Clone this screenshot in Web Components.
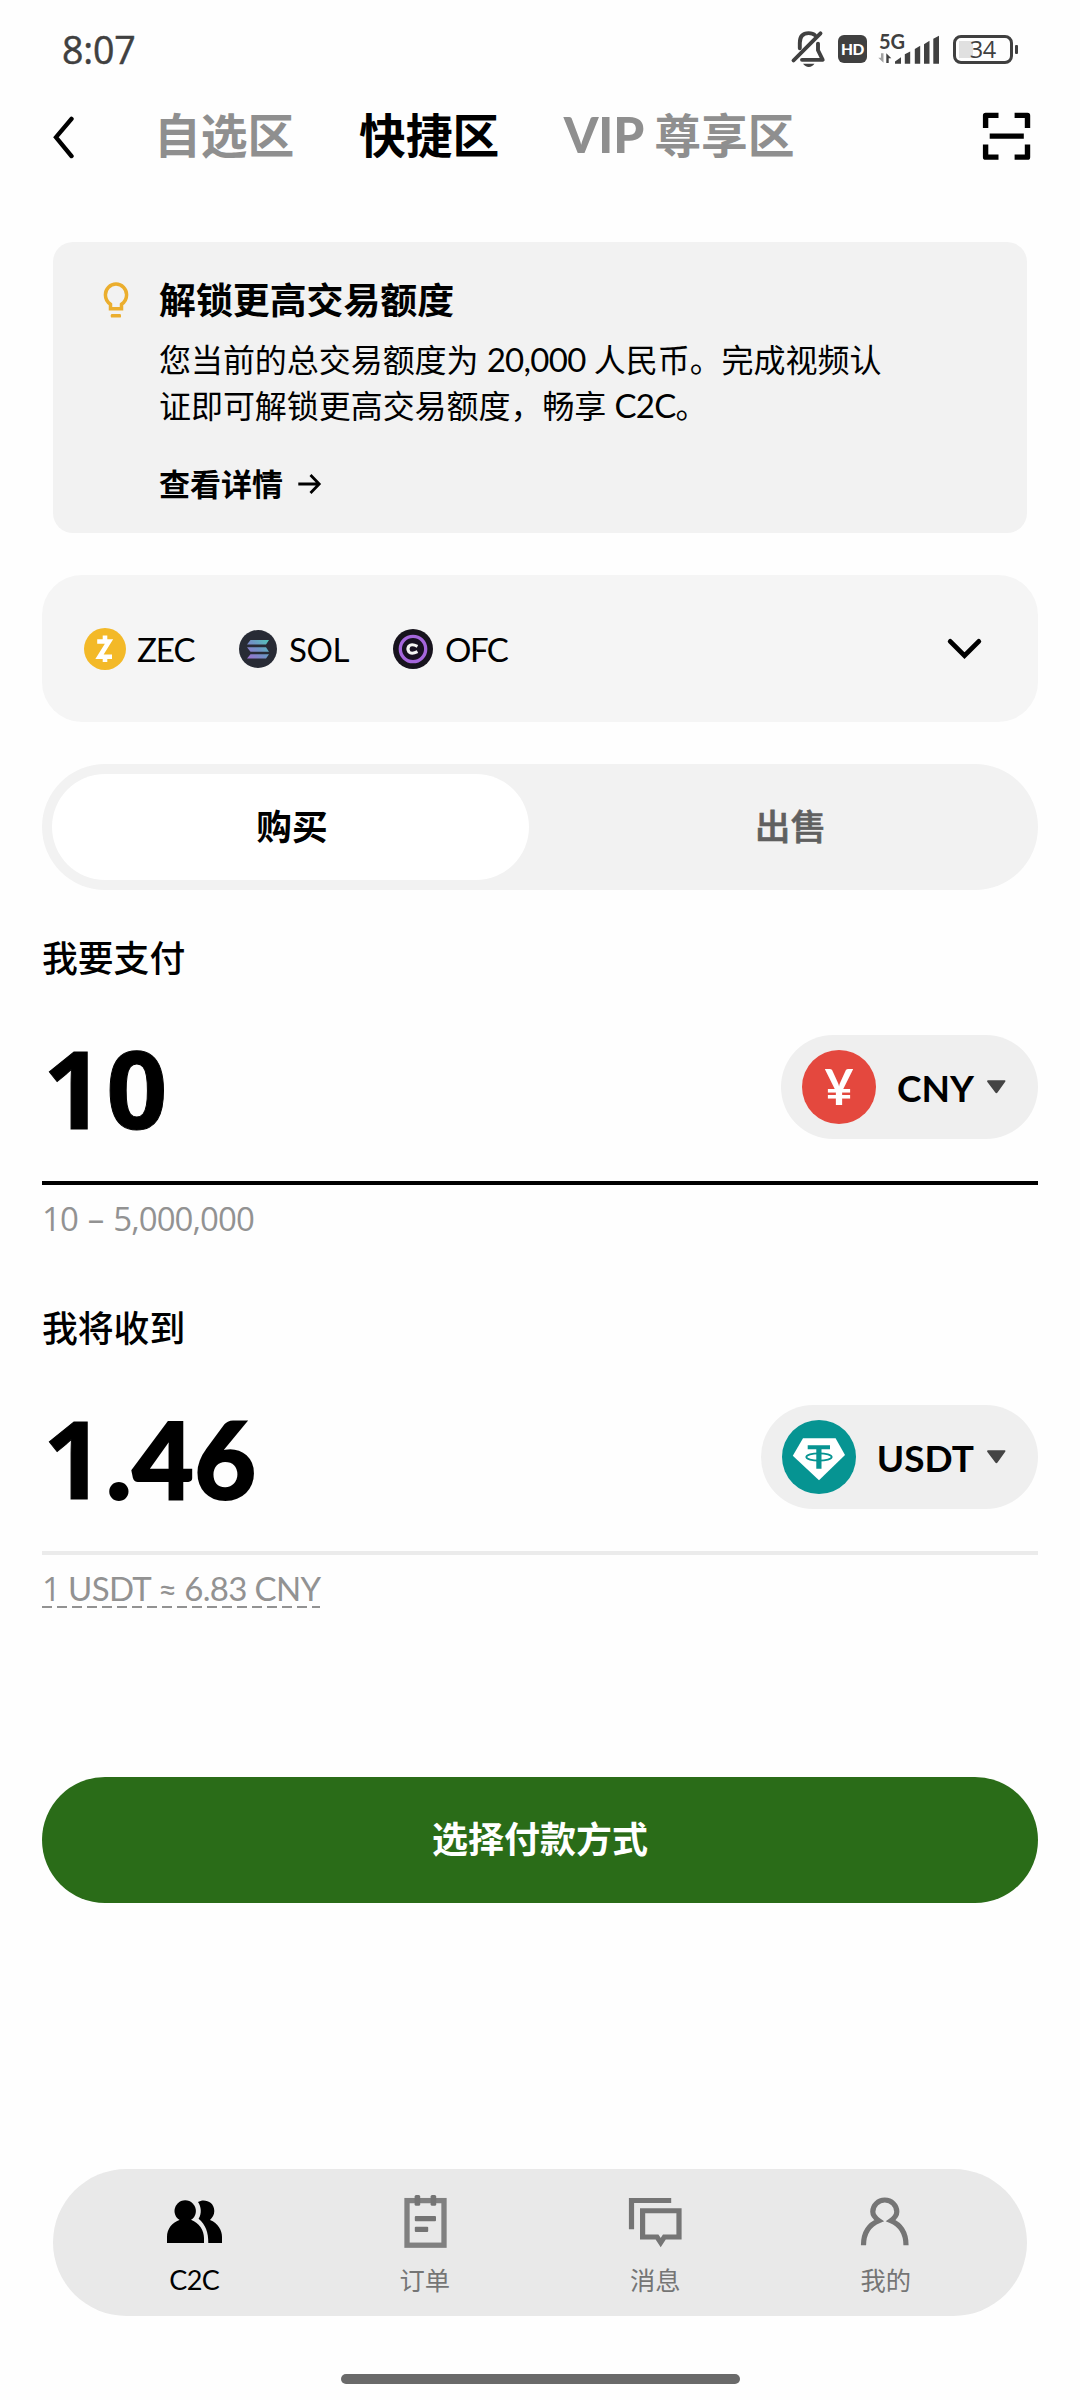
<!DOCTYPE html>
<html lang="zh-CN">
<head>
<meta charset="utf-8">
<title>C2C 快捷区</title>
<style>
  html, body { margin: 0; background: #fefefe; }
  body { font-family: Lato, "Noto Sans CJK SC", sans-serif; color: #000; -webkit-font-smoothing: antialiased; }
</style>
</head>
<body>
<c2c-screen></c2c-screen>

<script>
const define = (name, html, setup) => {
  const tpl = document.createElement('template');
  tpl.innerHTML = html;
  customElements.define(name, class extends HTMLElement {
    constructor() {
      super();
      this.attachShadow({ mode: 'open' }).append(tpl.content.cloneNode(true));
    }
    connectedCallback() { if (setup) setup(this, this.shadowRoot); }
  });
};

/* name: [x, y, width, height, markup, drawn height if it differs] */
const ICONS = {
  mute: [790, 31, 37, 41, `<g fill="none" stroke="#404040" stroke-width="3.9" stroke-linecap="round" stroke-linejoin="round"><path d="M799.800 51V45.500Q799.800 35.300 808.600 35.300Q813 35.300 815 37.500M818 46V53L822.700 62.800H802"/><path d="M793.500 63.500L820.500 35.500"/></g><path d="M803 67h11.500q-2 3.200-5.700 3.200t-5.800-3.200z" fill="#404040"/>`, 39.7],
  signal: [878, 35, 62, 32, `<g fill="#404040"><path d="M895 65.800V63.500l6-4.500v6.800zM904.800 65.800V56l5.400-3v12.800zM914.800 65.800V50.500l5.400-3.500v18.800zM924 65.800V45.500l5.500-3.500v23.800zM933.300 65.800V40l5.700-3.200v29z"/><path d="M886.300 65V54.800l5 5.200h-2.600v5z"/></g><path d="M883.500 54.800V64.800l-5.200-5.200h2.700v-4.800z" fill="#a2a2a2"/>`, 31],
  back: [50, 116, 27, 48, `<path d="M71.500 122L56 141L71.500 160.500" fill="none" stroke="#000" stroke-width="4.400" stroke-linecap="round" stroke-linejoin="miter"/>`, 46.5],
  scan: [982, 116, 50, 50, `<g fill="none" stroke="#000" stroke-width="5.400"><path d="M985.600 132.500V119.500H998.500M1014.600 119.500H1027.500V132.500M1027.500 149.500V162.700H1014.600M998.500 162.700H985.600V149.500" stroke-linejoin="round"/><path d="M989.700 141H1023.800"/></g>`, 48.4],
  bulb: [100, 280, 32, 40, `<path d="M110.500 308.700V304.300C107.200 302 105.400 299 105.400 294.700A10.600 10.600 0 0 1 126.600 294.700C126.600 299 124.800 302 121.500 304.300V308.700Z" fill="none" stroke="#ebae2e" stroke-width="3.500"/><rect x="110.800" y="314" width="10.200" height="3.600" rx="1.200" fill="#ebae2e"/>`],
  arrow: [298, 473, 25, 24, `<path d="M299.300 485H320M311.500 476L320.200 485L311.500 494" fill="none" stroke="#000" stroke-width="2.800"/>`],
  zec: [84, 627, 42, 42, `<circle cx="105" cy="648" r="21" fill="#f3b928"/><path d="M97.200 640.500H109L99.500 655.700H112M105 634.500V640M105 656V661" fill="none" stroke="#fff" stroke-width="4.600"/>`],
  sol: [239, 629, 38, 38, `<defs><linearGradient id="g" gradientUnits="userSpaceOnUse" x1="248" y1="658" x2="269" y2="638"><stop offset="0" stop-color="#9b6fd0"/><stop offset=".5" stop-color="#6f93c4"/><stop offset="1" stop-color="#50c9b8"/></linearGradient></defs><circle cx="258" cy="648" r="19" fill="#282b35"/><path d="M250.500 639H269L266 643.500H247zM247 646.300H266L269 650.800H250.500zM250.500 653.300H269L266 657.500H247z" fill="url(#g)"/>`],
  ofc: [393, 628, 40, 40, `<circle cx="413" cy="648" r="20" fill="#17131d"/><circle cx="413" cy="648" r="12.700" fill="#171021" stroke="#a566dc" stroke-width="3.300"/><path d="M417.500 645.300Q411.500 642.400 409 645Q406.800 648 409 651Q411.500 653.700 417.500 650.700" fill="none" stroke="#f4f4f4" stroke-width="3.100"/>`],
  chevron: [946, 638, 37, 26, `<path d="M950.200 643.500L964.500 658.300L978.800 643.500" fill="none" stroke="#000" stroke-width="4.800" stroke-linecap="round"/>`, 25.2],
  caret: [987, 1080, 19, 14, `<path d="M988 1080.300H1004.800Q1006 1080.800 1005 1082L997.500 1092.600Q996.400 1094 995.300 1092.600L987.400 1082Q986.600 1080.600 988 1080.300z" fill="#444"/>`],
  usdt: [782, 1420, 74, 74, `<circle cx="819" cy="1457" r="37" fill="#069492"/><path d="M803 1438.300H835.600L845 1455L819 1480.300L792.800 1455.700z" fill="#fff"/><path d="M807.700 1445.200H830V1449.200H821.500V1468.800H816.300V1449.200H807.700z" fill="#069492"/><ellipse cx="819" cy="1457" rx="12.700" ry="3.700" fill="none" stroke="#069492" stroke-width="1.800"/>`],
  people: [166, 2195, 57, 54, `<circle cx="185.200" cy="2211" r="10.700"/><path d="M180 2217H190.500L191 2219.800C199.500 2223 204 2230.500 204 2238V2243H167V2237C167 2229 172 2222.500 180 2219.800z"/><path d="M198 2202C203.500 2198.300 214.300 2201 214.300 2211C214.300 2215 212.500 2217.500 210 2220C218 2223 222 2230.500 222 2237V2243H208.300C208.500 2232.500 205.500 2224.500 198.600 2218.800C202 2213.500 201.200 2206.500 198 2202z"/>`],
  order: [397, 2195, 55, 54, `<g fill="none" stroke="#808080" stroke-width="5.300"><rect x="407" y="2200.600" width="37" height="44.600"/></g><g fill="#747474"><rect x="414.600" y="2195" width="5.600" height="10.700" rx="1.500"/><rect x="430.600" y="2195" width="5.600" height="10.700" rx="1.500"/><rect x="414.800" y="2216" width="21.200" height="5.200" rx="1"/><rect x="414.800" y="2226.800" width="13.400" height="5.200" rx="1"/></g>`],
  message: [627, 2197, 56, 56, `<g fill="none" stroke="#757575" stroke-width="5.200"><path d="M631.500 2232.500V2202.600H671.200"/><path d="M642.600 2213.300H679V2240.400H664.400L660.700 2246.200L657 2240.400H642.600z"/></g>`, 54.2],
  me: [858.5, 2197, 53, 54, `<path d="M863 2248.800C863 2236 869 2227.500 878.500 2223.500C874.500 2220.500 872.300 2217.500 872.300 2214.200A12 12 0 0 1 896.300 2214.200C896.300 2217.500 894.300 2220.500 890.300 2223.500C899.500 2227.500 905.500 2236 905.500 2248.800" fill="none" stroke="#757575" stroke-width="5.200"/>`, 52.3]
};

define('ui-icon', `<style>:host{display:block;flex:none}svg{display:block}</style>`, (el, root) => {
  const [x, y, w, h, body, drawn] = ICONS[el.getAttribute('name')];
  root.innerHTML += `<svg width="${w}" height="${drawn || h}" viewBox="${x} ${y} ${w} ${h}" preserveAspectRatio="none">${body}</svg>`;
});

define('status-bar', `<style>
  :host{display:flex;justify-content:space-between;align-items:center;height:98px;padding:0 62px 0 62px;box-sizing:border-box;color:#404040}
  .time{font:400 37.500px/48px "Open Sans",sans-serif;letter-spacing:-.2px;margin-top:1px;-webkit-text-stroke:.5px #404040}
  .right{display:flex;align-items:center}
  .hd{width:29px;height:28.500px;border-radius:6px;background:#404040;color:#fff;font:900 15.500px/29px Lato;text-align:center;margin:0 11px 0 11px;letter-spacing:-.3px}
  .sig{position:relative}
  .g{position:absolute;left:1px;top:-3px;font:700 20px/20px Lato;letter-spacing:0}
  .bat{width:59.500px;height:29px;box-sizing:border-box;border:3px solid #404040;border-radius:8px;background:linear-gradient(#e0e0e0,#e0e0e0) 3px 3px/14px 17px no-repeat;font:400 23.500px/23px "Open Sans";text-align:center;margin-left:13px;letter-spacing:-.5px}
  .nub{width:3.500px;height:9px;background:#404040;border-radius:1px;margin-left:2px}
</style>
<span class="time">8:07</span>
<div class="right"><ui-icon name="mute"></ui-icon><span class="hd">HD</span><div class="sig"><ui-icon name="signal"></ui-icon><span class="g">5G</span></div><span class="bat">34</span><span class="nub"></span></div>`);

define('top-tabs', `<style>
  :host{display:flex;align-items:center;height:76px;padding:0 48px 0 50px;font-weight:700;font-size:46.800px;line-height:76px;color:#8f8f8f;white-space:pre}
  nav{display:flex;flex:1;margin:-2px 0 0 77px;gap:64.500px}
  .on{color:#000}
  .vip b{font-size:49.500px;letter-spacing:-.2px;line-height:1}
</style>
<ui-icon name="back"></ui-icon>
<nav><span>自选区</span><span class="on">快捷区</span><span class="vip"><b>VIP </b>尊享区</span></nav>
<ui-icon name="scan"></ui-icon>`);

define('notice-card', `<style>
  :host{display:flex;gap:27px;box-sizing:border-box;height:291px;margin:68px 53px 0;padding:38px 46px 0 47px;border-radius:20px;background:#f2f2f2}
  h2{margin:0;font-size:36.900px;line-height:40px;font-weight:700}
  p{margin:17px 0 0;font-size:32px;line-height:46px;letter-spacing:-.05px;white-space:nowrap}
  i{font-style:normal;letter-spacing:-.7px;font-size:33px;line-height:1}
  a{display:flex;align-items:center;gap:14px;margin-top:35px;font-size:31px;line-height:40px;font-weight:700}
</style>
<ui-icon name="bulb"></ui-icon>
<div><h2><slot name="title"></slot></h2>
<p>您当前的总交易额度为 <i>20,000</i> 人民币。完成视频认<br>证即可解锁更高交易额度，畅享 <i>C2C</i>。</p>
<a><slot name="link"></slot><ui-icon name="arrow"></ui-icon></a></div>`);

define('coin-strip', `<style>
  :host{display:flex;align-items:center;height:147px;margin:42px 42px 0;padding:0 55px 0 42px;border-radius:40px;background:#f5f5f5;font-size:33px;line-height:40px}
  .list{display:flex;flex:1;align-items:center}
  span{box-sizing:border-box}
</style>
<div class="list">
<ui-icon name="zec"></ui-icon><span style="padding-left:11px;width:113px;letter-spacing:-1px">ZEC</span>
<ui-icon name="sol"></ui-icon><span style="padding-left:12px;width:116px;letter-spacing:-.4px">SOL</span>
<ui-icon name="ofc"></ui-icon><span style="padding-left:12px;letter-spacing:-1.500px">OFC</span>
</div><ui-icon name="chevron"></ui-icon>`);

define('side-switch', `<style>
  :host{display:flex;height:106px;margin:42px 42px 0;padding:10px;border-radius:63px;background:#f2f2f2;font-size:35.700px;line-height:105px;font-weight:700;text-align:center}
  .buy{width:477px;box-sizing:border-box;padding-left:3px;border-radius:53px;background:#fff}
  .sell{flex:1;color:#606060;padding-left:24px;-webkit-text-stroke:.6px #606060;font-weight:500}
</style><span class="buy">购买</span><span class="sell">出售</span>`);

define('currency-pill', `<style>
  :host{display:flex;align-items:center;height:104px;box-sizing:border-box;padding:0 32px 0 21px;border-radius:52px;background:#efefef;font-size:37px;font-weight:700;line-height:50px}
  .name{margin:2px 13px 0 21px}
  ::slotted(b){display:block;width:74px;height:74px;border-radius:50%;background:#e4483e;color:#fff;font:700 50px/73px Lato;text-align:center}
</style><slot name="logo"></slot><span class="name"><slot></slot></span><ui-icon name="caret"></ui-icon>`);

define('amount-field', `<style>
  :host{display:block;margin:0 42px;height:370px}
  .label{font-size:35.800px;line-height:52px;font-weight:500;height:50px}
  .row{display:flex;align-items:center;justify-content:space-between;height:104px;margin-top:52px}
  .value{font:700 107px/104px "Open Sans",sans-serif;letter-spacing:2px;margin:2px 0 0 1px;white-space:nowrap;-webkit-text-stroke:1px #000}
  .rule{height:4px;margin-top:42px;background:var(--rule,#000)}
  .hint{display:inline-block;height:48px;line-height:57px;font-size:33px;color:#929292;white-space:nowrap;margin-top:5px}
  :host([dashed]) .hint{background:repeating-linear-gradient(90deg,#929292 0 10px,transparent 10px 15px) 0 100%/100% 2px no-repeat}
</style>
<div class="label"><slot name="label"></slot></div>
<div class="row"><span class="value"><slot name="value"></slot></span><slot name="pill"></slot></div>
<div class="rule"></div><div class="hint"><slot name="hint"></slot></div>`);

define('pay-button', `<style>
  :host{display:block;height:126px;margin:0 42px;border-radius:63px;background:#2a6c18;color:#fff;font-size:36px;line-height:125px;font-weight:700;text-align:center}
</style><slot></slot>`);

define('nav-item', `<style>
  :host{display:flex;flex:1;flex-direction:column;align-items:center;color:#757575;font-size:25.300px;line-height:34px;gap:12px;padding-top:26px}
  :host([on]){color:#000;font-size:27px;letter-spacing:-.5px}
  .box{height:56px}
</style><div class="box"><slot name="icon"></slot></div><slot></slot>`);

define('bottom-nav', `<style>
  :host{display:flex;height:147px;margin:266px 53px 0;padding:0 26px;box-sizing:border-box;border-radius:74px;background:#e9e9e9}
</style><slot></slot>`);

define('c2c-screen', `<style>
  :host{display:block;width:1080px;height:2400px;overflow:hidden;background:#fefefe}
  .fields{padding-top:43px;margin-bottom:41px;height:846px;box-sizing:border-box}
  .home{width:399px;height:10px;border-radius:5px;background:#6a6a6a;margin:58px auto 0}
  .os{font-family:"Open Sans",sans-serif}
  .lt{font-family:Lato;font-weight:900;font-size:106px;letter-spacing:.8px;-webkit-text-stroke:2px #000}
</style>
<status-bar></status-bar>
<top-tabs></top-tabs>
<notice-card><span slot="title">解锁更高交易额度</span><span slot="link">查看详情</span></notice-card>
<coin-strip></coin-strip>
<side-switch></side-switch>
<div class="fields">
<amount-field><span slot="label">我要支付</span><span slot="value">10</span>
<currency-pill slot="pill"><b slot="logo">¥</b>CNY</currency-pill>
<span slot="hint" class="os" style="letter-spacing:-.95px;word-spacing:2.300px">10 – 5,000,000</span></amount-field>
<amount-field dashed style="--rule:#ebebeb"><span slot="label">我将收到</span><span slot="value">1<span class="lt">.46</span></span>
<currency-pill slot="pill"><ui-icon slot="logo" name="usdt"></ui-icon>USDT</currency-pill>
<span slot="hint" style="letter-spacing:-.65px"><span class="os">1</span> USDT ≈ 6.83 CNY</span></amount-field>
</div>
<pay-button>选择付款方式</pay-button>
<bottom-nav>
<nav-item on><ui-icon slot="icon" name="people"></ui-icon>C2C</nav-item>
<nav-item><ui-icon slot="icon" name="order"></ui-icon>订单</nav-item>
<nav-item><ui-icon slot="icon" name="message"></ui-icon>消息</nav-item>
<nav-item><ui-icon slot="icon" name="me"></ui-icon>我的</nav-item>
</bottom-nav>
<div class="home"></div>`);
</script>
</body>
</html>
